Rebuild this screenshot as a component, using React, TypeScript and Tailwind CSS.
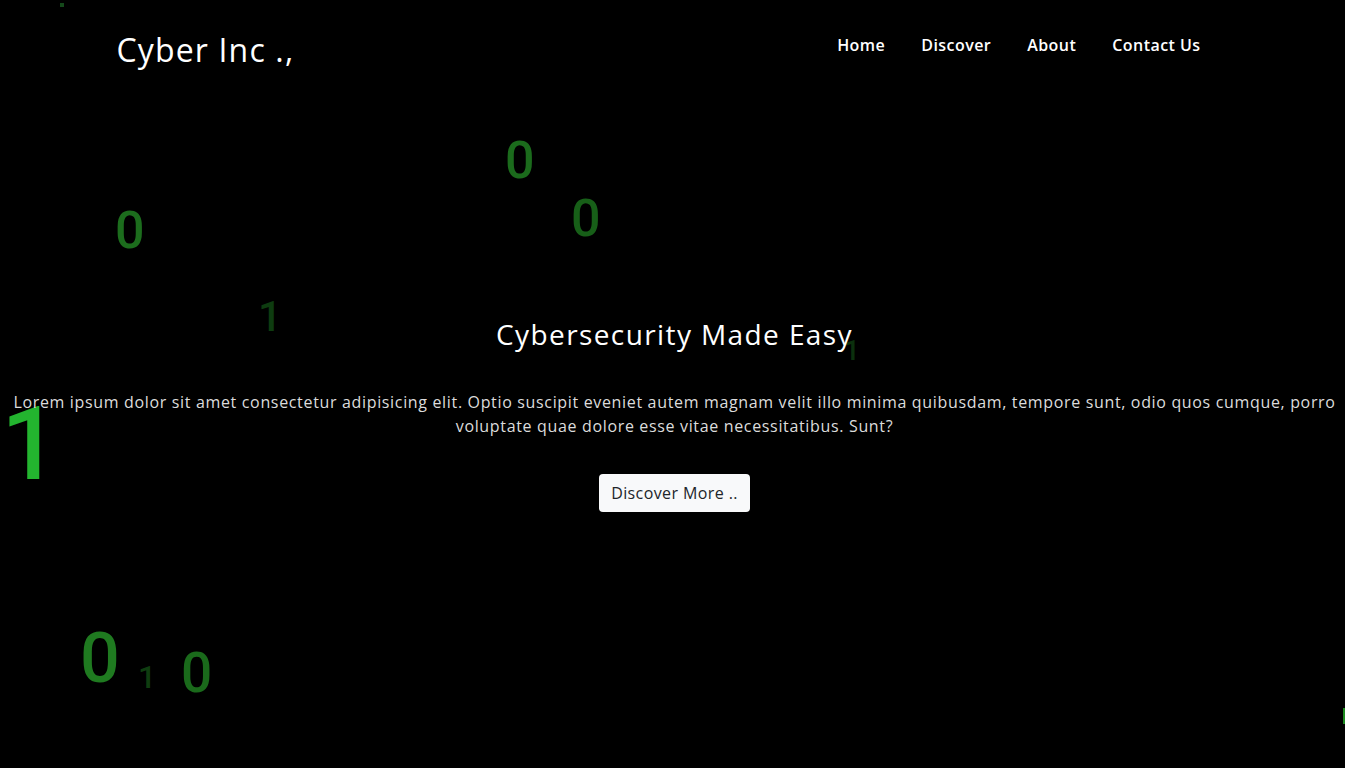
import React from "react";

type Digit = { ch: string; left: number; top: number; size: number; color: string };

const digits: Digit[] = [
  { ch: "0", left: 505, top: 135, size: 52, color: "#1b6b1c" },
  { ch: "0", left: 571, top: 193, size: 52, color: "#175f18" },
  { ch: "0", left: 115, top: 205, size: 52, color: "#1c6d1d" },
  { ch: "1", left: 258, top: 296, size: 42, color: "#0e3c10" },
  { ch: "1", left: 844, top: 337, size: 28, color: "#0b300d" },
  { ch: "1", left: 1, top: 393, size: 102, color: "#23b52f" },
  { ch: "0", left: 80, top: 623, size: 70, color: "#1f7a20" },
  { ch: "1", left: 138, top: 661, size: 32, color: "#0f3d10" },
  { ch: "0", left: 181, top: 646, size: 55, color: "#1a6a1b" },
];

export default function App() {
  return (
    <div
      className="relative w-full h-[768px] overflow-hidden bg-black text-white"
      style={{ fontFamily: '"Open Sans", "Liberation Sans", sans-serif' }}
    >
      {/* binary rain layer */}
      <div className="absolute inset-0 pointer-events-none" style={{ fontFamily: "Roboto, sans-serif" }}>
        {digits.map((d, i) => (
          <span
            key={i}
            className="absolute font-medium leading-none"
            style={{ left: d.left, top: d.top, fontSize: d.size, color: d.color }}
          >
            {d.ch}
          </span>
        ))}
        <div className="absolute left-[60px] top-[3px] w-[4px] h-[4px] bg-[#14481a]" />
        <div className="absolute left-[1343px] top-[708px] w-[2px] h-[16px] bg-[#1d8a1f]" />
      </div>

      <div className="relative">
        <header className="w-[1116px] mx-auto flex items-center justify-between pt-[26px]">
          <div className="pl-[2px] text-[32px] font-medium leading-[48px] tracking-[1.15px]">Cyber Inc .,</div>
          <nav className="flex items-center gap-[36px] pr-[30px] -mt-[10px] text-[16px] font-semibold tracking-[0.45px]">
            <span>Home</span>
            <span>Discover</span>
            <span>About</span>
            <span>Contact Us</span>
          </nav>
        </header>

        <main className="flex flex-col items-center text-center pt-[243px] pl-[12px] pr-[8px]">
          <h1 className="text-[28px] font-medium leading-[34px] tracking-[1.4px]">Cybersecurity Made Easy</h1>
          <p className="mt-[39px] text-[16px] font-medium leading-[24px] text-[#dcdcdc] tracking-[0.66px]">
            <span className="block whitespace-nowrap">
              Lorem ipsum dolor sit amet consectetur adipisicing elit. Optio suscipit eveniet autem magnam velit illo
              minima quibusdam, tempore sunt, odio quos cumque, porro
            </span>
            <span className="block whitespace-nowrap">voluptate quae dolore esse vitae necessitatibus. Sunt?</span>
          </p>
          <button className="mt-[36px] h-[38px] w-[151px] rounded-[4px] bg-[#f8f9fa] text-[#212529] text-[16px] tracking-[0.4px]">
            Discover More ..
          </button>
        </main>
      </div>
    </div>
  );
}
